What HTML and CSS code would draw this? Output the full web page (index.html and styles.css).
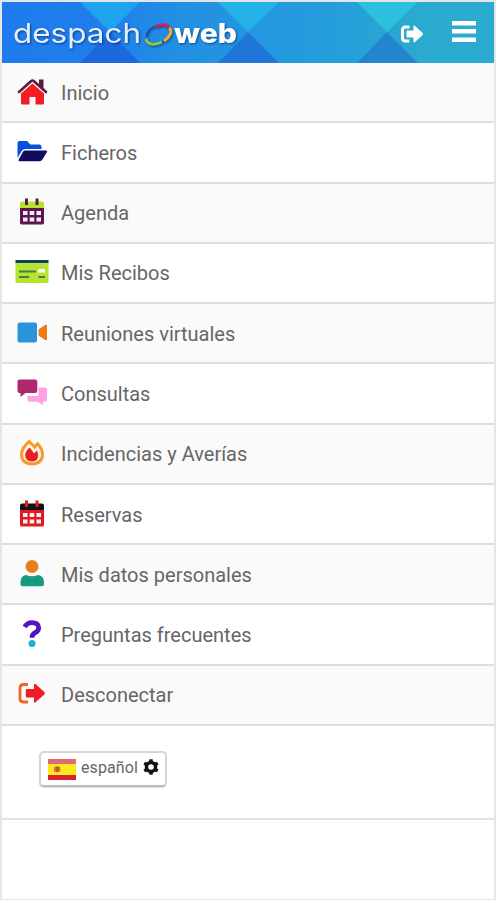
FILE: index.html
```html
<!DOCTYPE html>
<html lang="es">
  <head>
    <meta charset="UTF-8" />
    <meta name="viewport" content="width=device-width, initial-scale=1.0" />
    <title>despachoweb</title>
    <link rel="stylesheet" href="styles.css">
  </head>
  <body>
    <!-- Header -->
    <header class="header">
      <svg class="header-bg" viewBox="0 0 492 61" preserveAspectRatio="none">
        <path fill="#20a3ee" d="M78 0h60l-30 30z" />
        <path fill="#1c68df" d="M78 61l30-31 30 31z" />
        <path fill="#23b1e6" d="M216 0h61l-31 30z" />
        <path fill="#1f75d8" d="M216 61l30-31 31 31z" />
        <path fill="#2bc1dc" d="M355 0h61l-31 30z" />
        <path fill="#2485cf" d="M355 61l30-31 31 31z" />
      </svg>
      <svg class="logo" width="232" height="40" viewBox="0 0 232 40">
        <text class="logo-light" x="0" y="30" textLength="128" lengthAdjust="spacingAndGlyphs">despach</text>
        <g fill="none" stroke-width="3">
          <path stroke="#174b91" stroke-width="1.500" d="M134 24c-1-5 4-10 10-11M149 29c3-1 5-2 7-4" />
          <path stroke="#d51b65" d="M143 14c5-3 11-3 13 1" />
          <path stroke="#f5ad25" d="M156 15c4 3 1 9-5 13" />
          <path stroke="#8bc83f" d="M133 26c2 7 10 6 16 3" />
        </g>
        <text class="logo-bold" x="161" y="30" textLength="63" lengthAdjust="spacingAndGlyphs">web</text>
      </svg>
      <div class="header-actions">
        <svg width="24" height="20" viewBox="0 0 24 20">
          <path fill="none" stroke="#fff" stroke-width="3" d="M9.500 3H5.500Q2.500 3 2.500 6v8q0 3 3 3h4" />
          <path fill="#fff" d="M7.500 6.500h6V2.300q0-1.500 1.200-.5l8 7.200q.8 1 0 2l-8 7.200q-1.200 1-1.200-.5v-4.200h-6q-1 0-1-1v-5q0-1 1-1z" />
        </svg>
        <svg width="24" height="22" viewBox="0 0 24 22">
          <path fill="#fff" d="M0 0h24v4.500H0zM0 8h24v4.500H0zM0 16.500h24V21H0z" />
        </svg>
      </div>
    </header>

    <!-- Menu -->
    <nav class="menu">
      <a class="item">
        <svg class="icon" viewBox="0 0 34 30">
          <path fill="#f51d24" d="M6 15.500L17.500 5.500 29 15.500V25q0 1.500-1.500 1.500H20.500V19h-6v7.500h-7Q6 26.500 6 25z" />
          <path fill="#571d45" d="M24 1.500h4.500V12L24 8z" />
          <path fill="none" stroke="#571d45" stroke-width="2.600" stroke-linecap="round" d="M4 14L16 3.200q1.500-1.400 3 0L31 14" />
        </svg>
        Inicio
      </a>
      <a class="item">
        <svg class="icon" viewBox="0 0 34 30">
          <path fill="#0851dc" d="M4.500 3H12l3.500 3.500H24q2.500 0 2.500 2.500v2H10q-2 0-3 1.600L2.500 20V5q0-2 2-2z" />
          <path fill="#110c62" d="M10 12.500h20.500q2.300 0 1.300 1.800L27.500 21.500q-1 1.700-3 1.700H4.500q-1.700 0-.8-1.700L8 13.800q.7-1.300 2-1.300z" />
        </svg>
        Ficheros
      </a>
      <a class="item">
        <svg class="icon" viewBox="0 0 34 30">
          <path fill="#b8e22c" d="M7 3.500h20q2 0 2 2V10H5V5.500q0-2 2-2z" />
          <path fill="#5c1750" d="M5 10h24v15q0 1.500-2 1.500H7q-2 0-2-1.500zM10 .5h3V7h-3zM20.500.500h3V7h-3z" />
          <path fill="#f7eff7" d="M8 13h4.500v4H8zM14.700 13h4.500v4h-4.500zM21.500 13H26v4h-4.500zM8 19.500h4.500v4H8zM14.700 19.500h4.500v4h-4.500zM21.500 19.500H26v4h-4.500z" />
        </svg>
        Agenda
      </a>
      <a class="item">
        <svg class="icon" viewBox="0 0 34 30">
          <path fill="#0b4650" d="M.5 2h33v3.200H.5z" />
          <path fill="#b9e42b" d="M.5 5.500h33v18q0 1.500-1.500 1.500H2Q.5 25 .5 23.500z" />
          <path stroke="#39805a" stroke-width="1.800" d="M4 13.500h17M4 19h10M23.500 19h6.500" />
          <path fill="#fff" d="M23 11h7v3.500h-7z" />
        </svg>
        Mis Recibos
      </a>
      <a class="item">
        <svg class="icon" viewBox="0 0 34 30">
          <rect x="2.500" y="3.500" width="19.500" height="20" rx="2.200" fill="#2993db" />
          <path fill="#ed7b16" d="M23.500 10.500L30 6q2-1 2 1v13q0 2-2 1l-6.500-4.500z" />
        </svg>
        Reuniones virtuales
      </a>
      <a class="item">
        <svg class="icon" viewBox="0 0 34 30">
          <path fill="#ffa2e4" d="M23.500 8.500H30q2 0 2 2v10q0 2.300-2 2.300h-2v3.500l-5-3.500h-8q-2.500 0-2.500-2.300V17H21q2.500 0 2.500-2.500z" />
          <path fill="#ad286e" d="M4.500.500H20q2.300 0 2.300 2v9.300q0 2.300-2.300 2.300H10.500L5.500 18v-3.900h-1q-2 0-2-2.300V2.500q0-2 2-2z" />
        </svg>
        Consultas
      </a>
      <a class="item">
        <svg class="icon" viewBox="0 0 34 30">
          <path fill="#f39c2b" d="M14 .5q3 2.200 5.500 5.500L22.500 2.500Q29 9 29 15q0 11-12 11.500Q5 26 5 15 5 8.500 14 .5z" />
          <path fill="#fff3df" d="M14 4.500q3.500 3 5.700 6L22.500 7Q26 11 26 15.500q0 7.500-9 8-9-.5-9-8Q8 10.500 14 4.500z" />
          <path fill="#e91d25" d="M14.500 8.500q2.500 2.500 4.500 6l3-3q3.500 10.500-5 11-6.800-.5-6.800-6.500 0-3.500 4.300-7.500z" />
        </svg>
        Incidencias y Averías
      </a>
      <a class="item">
        <svg class="icon" viewBox="0 0 34 30">
          <path fill="#111" d="M7 3.500h20q2 0 2 2V10H5V5.500q0-2 2-2z" />
          <path fill="#e11925" d="M5 10h24v15q0 1.500-2 1.500H7q-2 0-2-1.500zM10 .5h3V7h-3zM20.500.500h3V7h-3z" />
          <path fill="#fff0f0" d="M8 13h4.500v4H8zM14.700 13h4.500v4h-4.500zM21.500 13H26v4h-4.500zM8 19.500h4.500v4H8zM14.700 19.500h4.500v4h-4.500zM21.500 19.500H26v4h-4.500z" />
        </svg>
        Reservas
      </a>
      <a class="item">
        <svg class="icon" viewBox="0 0 34 30">
          <circle cx="17" cy="6.500" r="6.500" fill="#e97e1c" />
          <path fill="#149b80" d="M11 15q6 2.500 12 0 6 1 6 7v2.500q0 1.800-2 1.800H7.500q-2 0-2-1.800V22q0-6 5.500-7z" />
        </svg>
        Mis datos personales
      </a>
      <a class="item">
        <svg class="icon" viewBox="0 0 34 30">
          <path fill="none" stroke="#5216be" stroke-width="4.800" d="M9.700 7Q12 2.700 17 2.700q6.700 0 6.700 5 0 3-3.500 5-3.200 1.600-3.200 5" />
          <circle cx="17" cy="23.500" r="3.500" fill="#1cb2d8" />
        </svg>
        Preguntas frecuentes
      </a>
      <a class="item">
        <svg class="icon" viewBox="0 0 34 30">
          <path fill="none" stroke="#f0642c" stroke-width="2.800" d="M13 4.500H8.500Q5 4.500 5 8v10.500Q5 22 8.500 22H13" />
          <path fill="#ee1c25" d="M12 9h7V5q0-2.300 1.800-.7l8.500 7.700q1.200 1.200 0 2.400l-8.500 7.700q-1.800 1.600-1.800-.7v-4h-7q-1.200 0-1.200-1.200v-6Q10.800 9 12 9z" />
        </svg>
        Desconectar
      </a>
    </nav>

    <!-- Language selector -->
    <div class="language">
      <button type="button" class="language-button">
        <svg width="28" height="21" viewBox="0 0 28 21">
          <path fill="#d9232c" d="M0 0h28v21H0z" />
          <path fill="#de6b70" d="M0 0h28v5H0z" />
          <path fill="#fbe921" d="M0 5h28v11H0z" />
          <path fill="#c97832" d="M6 8h1.500v5H6zM11 8h1.200v5H11z" />
          <path fill="#c84f32" d="M7.500 7.500h3.500V12l-1.700 1.700L7.500 12z" />
        </svg>
        <span>español</span>
        <svg class="gear" width="16" height="16" viewBox="0 0 16 16">
          <circle cx="8" cy="8" r="4.500" fill="none" stroke="#111" stroke-width="3.400" />
          <path fill="#111" d="M6.400.3h3.200L10 3.500H6zM6.400 15.700h3.200l.4-3.200H6zM.500 5.500l1.600-2.800 3 1.300-2 3.400zM15.500 5.500l-1.600-2.800-3 1.300 2 3.400zM.500 10.500l1.600 2.800 3-1.300-2-3.400zM15.500 10.500l-1.600 2.800-3-1.300 2-3.400z" />
        </svg>
      </button>
    </div>
  </body>
</html>
```
FILE: styles.css
```css
/* General Styles */
* {
  box-sizing: border-box;
}

body {
  height: 900px;
  margin: 0;
  padding-top: 2px;
  font-family: Roboto, sans-serif;
  background-color: #fff;
  color: #666668;
  border: 0 solid #e6e6e6;
  border-width: 0 2px 1px;
  overflow: hidden;
  box-shadow: inset 0 2px #e3e5e8;
}

/* Header */
.header {
  position: relative;
  display: flex;
  align-items: center;
  justify-content: space-between;
  height: 61px;
  padding: 0 18px 0 11px;
  background: linear-gradient(90deg, #1f7bed 0, #1f7eeb 20%, #228fe3 35%, #259edc 68%, #2aaace 85%, #2aabcf);
}

.header-bg {
  position: absolute;
  inset: 0;
  width: 100%;
  height: 100%;
}

.logo,
.header-actions {
  position: relative;
}

.logo {
  filter: drop-shadow(1px 1px 1px rgba(0, 25, 80, 0.6));
}

.logo-light,
.logo-bold {
  font-family: Inter, sans-serif;
  font-size: 27px;
}

.logo-light {
  fill: #e2efff;
}

.logo-bold {
  fill: #fff;
  font-weight: 800;
}

.header-actions {
  display: flex;
  align-items: center;
  gap: 28px;
  margin-top: -2px;
}

.header-actions svg:first-child {
  margin-top: 4px;
}

/* Menu */
.menu {
  display: grid;
  grid-template-rows: repeat(11, 1fr);
  height: 663px;
}

.item {
  display: flex;
  align-items: center;
  gap: 12px;
  padding: 1px 0 0 13px;
  font-size: 20px;
  border-bottom: 2px solid #dedede;
}

.item:nth-child(odd) {
  background-color: #fafafa;
}

.icon {
  width: 34px;
  height: 30px;
}

/* Language selector */
.language {
  height: 94px;
  padding: 25px 37px;
  border-bottom: 2px solid #e3e3e3;
}

.language-button {
  display: flex;
  align-items: center;
  gap: 5px;
  height: 36px;
  padding: 0 6px 0 7px;
  font-family: inherit;
  font-size: 16px;
  letter-spacing: 0.1px;
  color: #666668;
  background-color: #fff;
  border: 2px solid #d6d6d6;
  border-bottom-color: #bcbcbc;
  border-radius: 5px;
  box-shadow: 0 1px 1px rgba(0, 0, 0, 0.15);
}

.language-button span {
  margin-top: -4px;
}

.gear {
  margin-top: -4px;
}
```
